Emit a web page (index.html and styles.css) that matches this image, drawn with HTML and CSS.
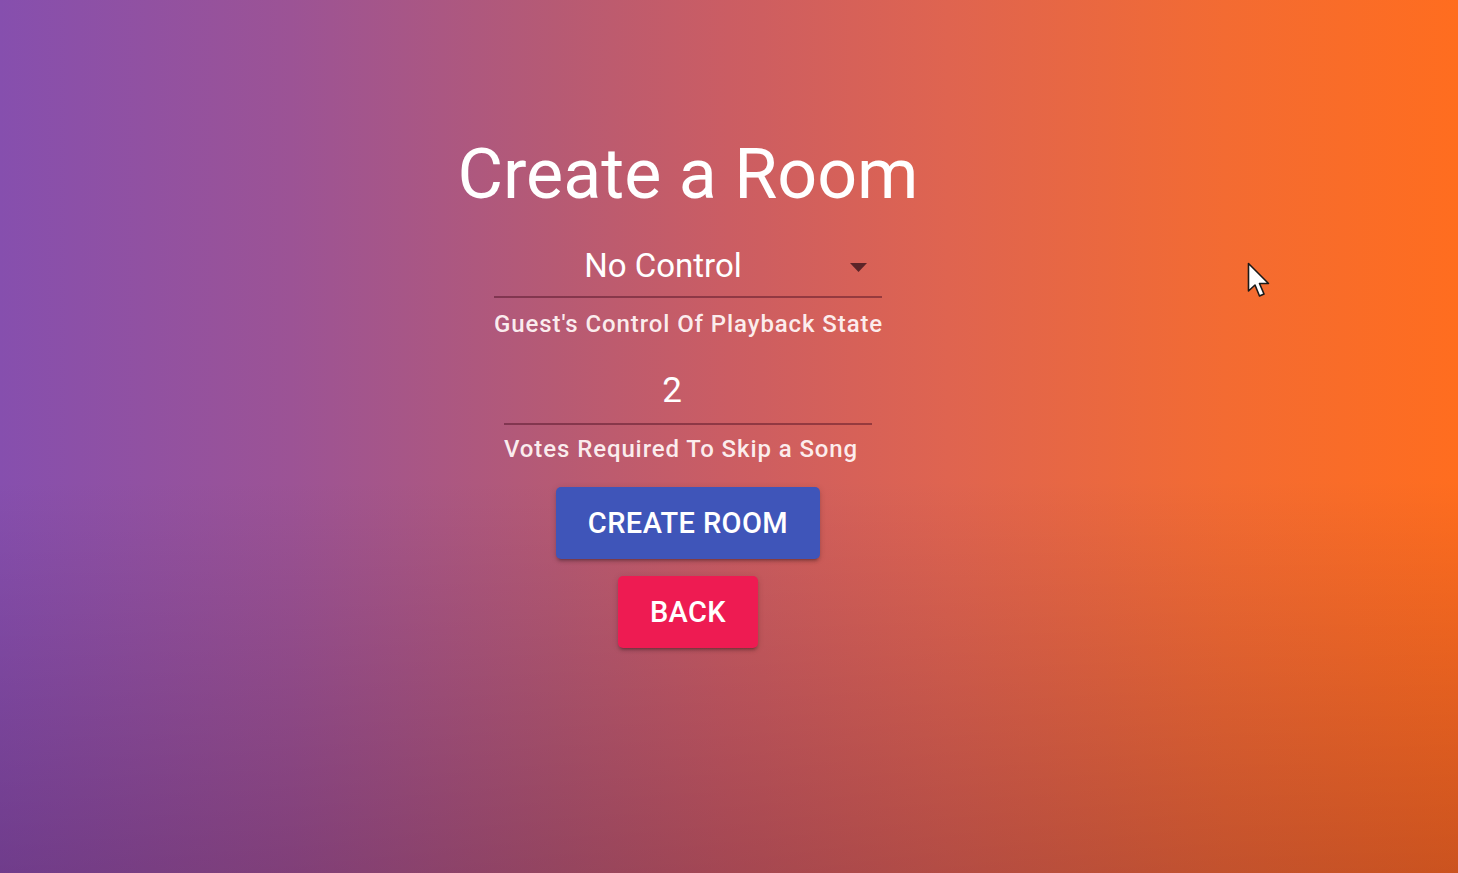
FILE: index.html
```html
<!DOCTYPE html>
<html lang="en">
<head>
<meta charset="utf-8">
<title>Create a Room</title>
<link rel="stylesheet" href="styles.css">
</head>
<body>
<div class="page">
  <main class="form">
    <h1 class="title">Create a Room</h1>

    <div class="field field-select">
      <div class="control">
        <span class="value">No Control</span>
        <svg class="arrow" width="17" height="9" viewBox="0 0 17 9" aria-hidden="true"><path d="M0 0 L17 0 L8.5 9 Z"/></svg>
      </div>
      <p class="helper">Guest's Control Of Playback State</p>
    </div>

    <div class="field field-number">
      <div class="control">
        <span class="value">2</span>
      </div>
      <p class="helper">Votes Required To Skip a Song</p>
    </div>

    <div class="actions">
      <button class="btn btn-primary" type="button">Create Room</button>
      <button class="btn btn-secondary" type="button">Back</button>
    </div>
  </main>

  <svg class="cursor" width="26" height="38" viewBox="0 0 26 38" aria-hidden="true">
    <path d="M1.5 1.5 L1.5 29 L8 23 L12.5 34 L17 32 L12.5 21.5 L21.5 21.5 Z" fill="#ffffff" stroke="#1a1a1a" stroke-width="1.6" stroke-linejoin="round"/>
  </svg>
</div>
</body>
</html>
```

FILE: styles.css
```css
html, body {
  margin: 0;
  padding: 0;
  height: 100%;
}

body {
  font-family: Roboto, "Noto Sans", "Liberation Sans", sans-serif;
  overflow: hidden;
}

.page {
  position: relative;
  width: 1458px;
  height: 873px;
  background:
    linear-gradient(to bottom, rgba(30, 0, 30, 0) 0%, rgba(30, 0, 30, 0) 55%, rgba(40, 0, 30, 0.24) 100%),
    linear-gradient(to right, #864fae 0%, #9c5395 20%, #b65a74 38%, #cb5d63 50%, #df6450 65%, #f36b32 84%, #ff6d1f 100%);
  box-sizing: border-box;
  padding: 139px 82px 0 0;
}

.form {
  display: flex;
  flex-direction: column;
  align-items: center;
}

.title {
  margin: 0;
  font-size: 70px;
  line-height: 1;
  font-weight: 400;
  color: #ffffff;
}

.field {
  display: flex;
  flex-direction: column;
}

.control {
  position: relative;
  display: flex;
  align-items: center;
  border-bottom: 2px solid rgba(70, 10, 30, 0.45);
  color: #ffffff;
}

.value {
  line-height: 1;
}

.field-select {
  width: 388px;
  margin-top: 40px;
}

.field-select .control {
  justify-content: center;
  padding: 0 50px 14px 0;
  font-size: 33px;
}

.arrow {
  position: absolute;
  right: 15px;
  top: 14px;
  fill: #5b2428;
}

.field-number {
  width: 368px;
  margin-top: 37px;
}

.field-number .control {
  justify-content: center;
  padding: 0 32px 15px 0;
  font-size: 35px;
}

.helper {
  margin: 14px 0 0;
  font-size: 24px;
  font-weight: 500;
  line-height: 1;
  color: rgba(255, 246, 246, 0.95);
  letter-spacing: 0.9px;
  text-align: left;
  white-space: nowrap;
}

.field-number .helper {
  margin-top: 12px;
}

.actions {
  display: flex;
  flex-direction: column;
  align-items: center;
  gap: 17px;
  margin-top: 26px;
}

.btn {
  border: none;
  border-radius: 5px;
  height: 72px;
  font-family: Roboto, "Noto Sans", "Liberation Sans", sans-serif;
  font-size: 29px;
  font-weight: 500;
  text-transform: uppercase;
  letter-spacing: 0.4px;
  color: #ffffff;
  box-shadow: 0 4px 2px -3px rgba(0, 0, 0, 0.2), 0 3px 3px 0 rgba(0, 0, 0, 0.14), 0 1px 7px 0 rgba(0, 0, 0, 0.12);
  cursor: pointer;
}

.btn-primary {
  width: 264px;
  background: #3f55b9;
}

.btn-secondary {
  width: 140px;
  background: #ee1b52;
}

.cursor {
  position: absolute;
  left: 1247px;
  top: 262px;
}
```
